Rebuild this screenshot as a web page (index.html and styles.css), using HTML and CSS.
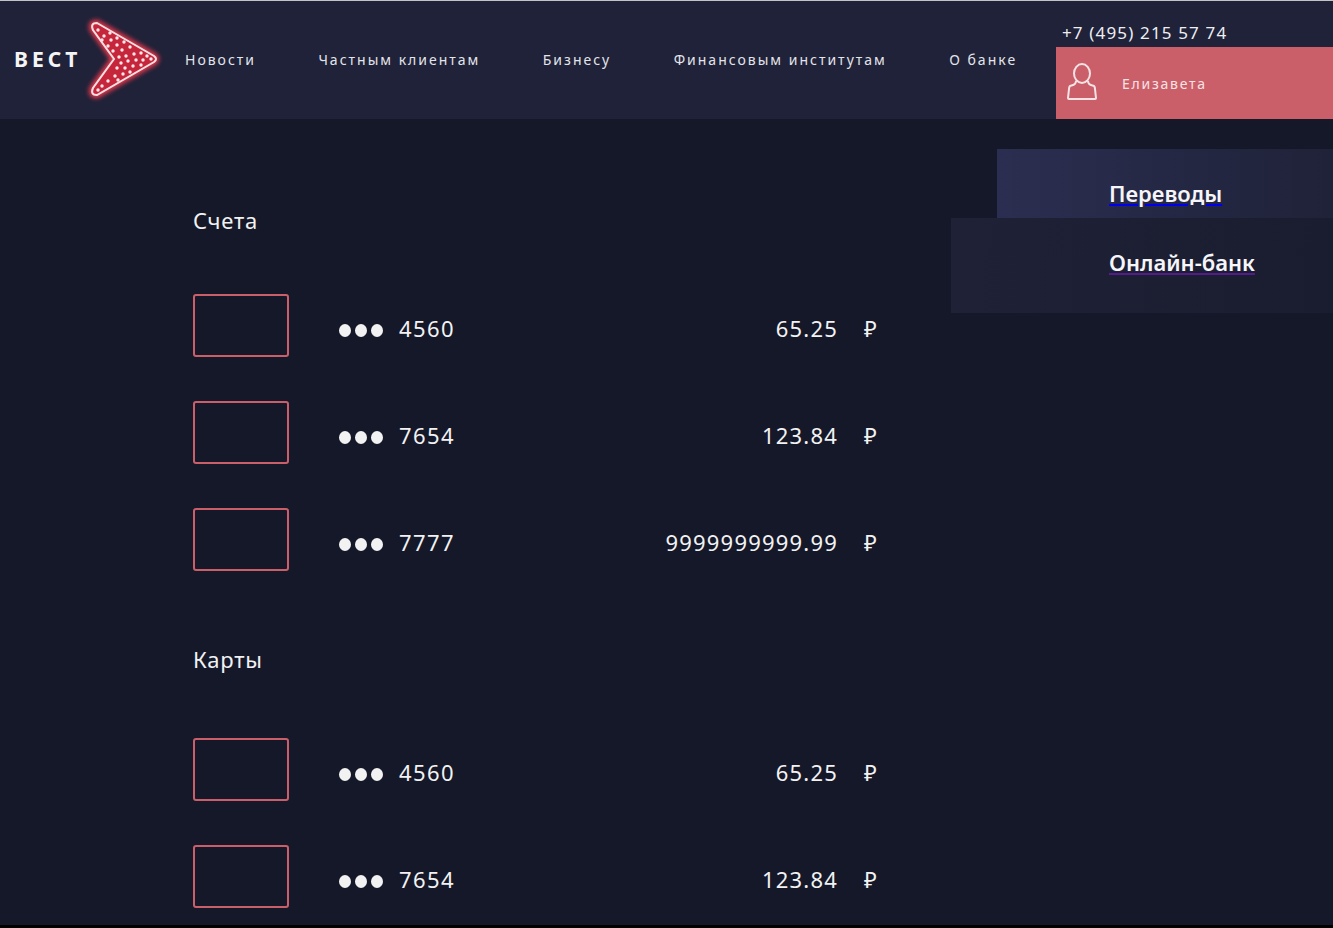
FILE: index.html
```html
<!DOCTYPE html>
<html lang="ru">
<head>
  <meta charset="UTF-8">
  <title>Вест</title>
  <link rel="stylesheet" href="styles.css">
</head>
<body>

  <header class="header">
    <a class="logo">
      <span class="logo-text">ВЕСТ</span>
      <svg class="logo-arrow" width="80" height="88" viewBox="0 0 80 88">
        <defs>
          <filter id="glow" x="-20%" y="-20%" width="140%" height="140%">
            <feGaussianBlur stdDeviation="2.4"/>
          </filter>
        </defs>
        <path class="arrow-glow" d="M13 8 L70 41 Q74 44 70 47 L13 80 Q6 80 9 73 L30 44 L9 15 Q6 8 13 8 Z" filter="url(#glow)"/>
        <path class="arrow-body" d="M13 8 L70 41 Q74 44 70 47 L13 80 Q6 80 9 73 L30 44 L9 15 Q6 8 13 8 Z"/>
        <g class="arrow-dots">
          <circle cx="14" cy="15" r="1.7"/><circle cx="20" cy="21" r="1.7"/><circle cx="26" cy="18" r="1.7"/>
          <circle cx="18" cy="25" r="1.7"/><circle cx="27" cy="25" r="1.7"/><circle cx="33" cy="23" r="1.7"/>
          <circle cx="24" cy="31" r="1.7"/><circle cx="33" cy="30" r="1.7"/><circle cx="40" cy="27" r="1.7"/>
          <circle cx="29" cy="36" r="1.7"/><circle cx="38" cy="35" r="1.7"/><circle cx="46" cy="32" r="1.7"/>
          <circle cx="35" cy="42" r="1.7"/><circle cx="42" cy="41" r="1.7"/><circle cx="50" cy="39" r="1.7"/>
          <circle cx="57" cy="38" r="1.7"/><circle cx="63" cy="41" r="1.7"/><circle cx="37" cy="48" r="1.7"/>
          <circle cx="44" cy="46" r="1.7"/><circle cx="52" cy="45" r="1.7"/><circle cx="59" cy="45" r="1.7"/>
          <circle cx="67" cy="44" r="1.7"/><circle cx="33" cy="53" r="1.7"/><circle cx="41" cy="53" r="1.7"/>
          <circle cx="49" cy="51" r="1.7"/><circle cx="57" cy="50" r="1.7"/><circle cx="31" cy="61" r="1.7"/>
          <circle cx="39" cy="59" r="1.7"/><circle cx="46" cy="57" r="1.7"/><circle cx="24" cy="66" r="1.7"/>
          <circle cx="34" cy="65" r="1.7"/><circle cx="18" cy="71" r="1.7"/><circle cx="14" cy="75" r="1.7"/>
        </g>
        <path class="arrow-line" d="M13 8 L70 41 Q74 44 70 47 L13 80 Q6 80 9 73 L30 44 L9 15 Q6 8 13 8 Z"/>
      </svg>
    </a>

    <nav class="nav">
      <a>Новости</a>
      <a>Частным клиентам</a>
      <a>Бизнесу</a>
      <a>Финансовым институтам</a>
      <a>О банке</a>
    </nav>

    <div class="header-right">
      <div class="phone">+7 (495) 215 57 74</div>
      <div class="user">
        <svg class="user-icon" width="32" height="38" viewBox="0 0 32 38">
          <ellipse cx="16" cy="10.5" rx="8" ry="9.5"/>
          <path d="M10 18 C10 22 7 22 4 23 Q3 24 3 26 L2 35 Q2 36 3 36 L29 36 Q30 36 30 35 L29 26 Q29 24 28 23 C25 22 22 22 22 18"/>
        </svg>
        <span>Елизавета</span>
      </div>
    </div>
  </header>

  <div class="page">
    <main class="content">
      <h2 class="section-title">Счета</h2>
      <div class="row">
        <div class="card"></div>
        <div class="dots"><i></i><i></i><i></i></div>
        <div class="number">4560</div>
        <div class="amount">65.25</div>
        <div class="currency">₽</div>
      </div>
      <div class="row">
        <div class="card"></div>
        <div class="dots"><i></i><i></i><i></i></div>
        <div class="number">7654</div>
        <div class="amount">123.84</div>
        <div class="currency">₽</div>
      </div>
      <div class="row">
        <div class="card"></div>
        <div class="dots"><i></i><i></i><i></i></div>
        <div class="number">7777</div>
        <div class="amount">9999999999.99</div>
        <div class="currency">₽</div>
      </div>

      <h2 class="section-title section-cards">Карты</h2>
      <div class="row">
        <div class="card"></div>
        <div class="dots"><i></i><i></i><i></i></div>
        <div class="number">4560</div>
        <div class="amount">65.25</div>
        <div class="currency">₽</div>
      </div>
      <div class="row">
        <div class="card"></div>
        <div class="dots"><i></i><i></i><i></i></div>
        <div class="number">7654</div>
        <div class="amount">123.84</div>
        <div class="currency">₽</div>
      </div>
    </main>

    <aside class="side">
      <div class="tab tab-first"><a href="#" class="link-new">Переводы</a></div>
      <div class="tab tab-second"><a href="#" class="link-visited">Онлайн-банк</a></div>
    </aside>
  </div>

</body>
</html>
```

FILE: styles.css
```css
* {
  box-sizing: border-box;
}
html {
  background-color: #000;
}
body {
  margin: 0;
  height: 925px;
  overflow: hidden;
  border-top: 1px solid #c4c4c4;
  background-color: #151829;
  color: #f2f2f2;
  font-family: "Noto Sans", sans-serif;
}
.header {
  display: flex;
  height: 118px;
  background-color: #1f2238;
}
.logo {
  display: flex;
  align-items: center;
  width: 185px;
  padding-left: 14px;
}
.logo-text {
  font-size: 21px;
  font-weight: 700;
  letter-spacing: 4px;
  width: 70px;
  margin-top: -3px;
  color: #f4f4f4;
}
.logo-arrow {
  margin-top: -2px;
}
.arrow-glow {
  fill: none;
  stroke: #ff3a50;
  stroke-width: 6;
}
.arrow-body {
  fill: #c6263c;
}
.arrow-dots {
  fill: #fbe9ea;
}
.arrow-line {
  fill: none;
  stroke: #fbdfe1;
  stroke-width: 2;
}
.nav {
  display: flex;
  align-items: center;
  gap: 62.4px;
  width: 871px;
  padding-bottom: 1px;
  font-size: 14px;
  letter-spacing: 2px;
  color: #e4e4ea;
}
.header-right {
  flex: 1;
  display: flex;
  flex-direction: column;
}
.phone {
  height: 46px;
  padding: 21px 0 0 6px;
  font-size: 17px;
  line-height: 22px;
  letter-spacing: 1.15px;
  color: #eeeef2;
}
.user {
  flex: 1;
  display: flex;
  align-items: center;
  gap: 24px;
  padding-left: 10px;
  background-color: #cb5f69;
  font-size: 14px;
  letter-spacing: 1.75px;
  color: #f6e3e5;
}
.user-icon {
  margin-top: -3px;
  fill: none;
  stroke: #f6e3e5;
  stroke-width: 2;
}
.page {
  display: flex;
}
.content {
  width: 951px;
  padding: 86px 0 0 193px;
}
.section-title {
  margin: 0;
  height: 30px;
  font-size: 22px;
  font-weight: 400;
  line-height: 30px;
  letter-spacing: 0.8px;
  color: #f2f2f2;
}
.section-cards {
  margin-top: 73px;
}
.row {
  display: flex;
  align-items: center;
  height: 63px;
  margin-top: 44px;
  font-size: 22px;
  letter-spacing: 1.2px;
}
.section-title + .row {
  margin-top: 59px;
}
.section-cards + .row {
  margin-top: 64px;
}
.card {
  width: 96px;
  height: 63px;
  border: 2px solid #cb5f69;
  border-radius: 3px;
}
.dots {
  display: flex;
  gap: 4px;
  margin: 9px 0 0 50px;
}
.dots i {
  width: 12px;
  height: 13px;
  border-radius: 50%;
  background-color: #f2f2f2;
}
.number {
  width: 130px;
  margin: 5px 0 0 16px;
  letter-spacing: 1.4px;
}
.amount {
  width: 309px;
  margin-top: 5px;
  text-align: right;
}
.currency {
  margin: 5px 0 0 26px;
}
.side {
  flex: 1;
  display: flex;
  flex-direction: column;
  align-items: flex-end;
  padding-top: 30px;
}
.tab {
  font-size: 22px;
  font-weight: 600;
  line-height: 30px;
}
.tab a {
  color: #f6f6fa;
}
.tab-first {
  width: 336px;
  height: 69px;
  padding: 29px 0 0 112px;
  background: linear-gradient(90deg, #2b2e50, #1f2238);
}
.tab-second {
  width: 382px;
  height: 95px;
  padding: 29px 0 0 158px;
  background: linear-gradient(90deg, #1f2136, #1a1c30);
}
.link-new {
  text-decoration-color: #0000ee;
}
.link-visited {
  text-decoration-color: #551a8b;
}
```
